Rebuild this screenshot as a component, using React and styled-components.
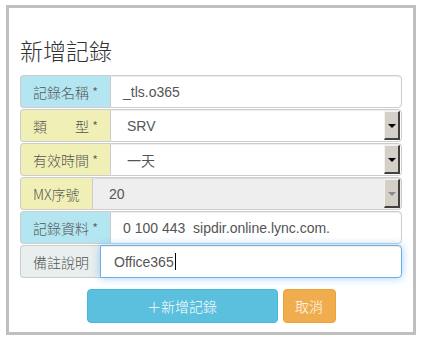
import React from 'react';
import styled, {createGlobalStyle} from 'styled-components';

const GlobalStyle = createGlobalStyle`
  html, body {
    margin: 0;
    padding: 0;
    background: #ffffff;
  }
  body {
    font-family: "Liberation Sans", "Noto Sans CJK TC", Arial, sans-serif;
    font-size: 14px;
    color: #555;
  }
`;

const Page = styled.div`
  width: 423px;
  height: 338px;
  padding: 5px 7px 3px 6px;
  box-sizing: border-box;
`;

const Card = styled.div`
  width: 410px;
  height: 330px;
  box-sizing: border-box;
  border: 3px solid #bfbfbf;
  padding: 26px 11px 0 11px;
  background: #fff;
`;

const Title = styled.h3`
  margin: 0 0 9px 0;
  font-family: "Noto Sans CJK TC", "Liberation Sans", sans-serif;
  font-weight: 300;
  font-size: 23px;
  line-height: 32px;
  color: #333;
`;

const Form = styled.div`
  display: flex;
  flex-direction: column;
  gap: 1px;
`;

const Group = styled.div`
  display: flex;
  height: 33px;
`;

const Addon = styled.div`
  display: flex;
  align-items: center;
  flex: none;
  box-sizing: border-box;
  padding: 0 12px;
  background: ${(p) => p.$bg};
  border: 1px solid #ccc;
  border-right: none;
  border-radius: 4px 0 0 4px;
  font-family: "Noto Sans CJK TC", "Liberation Sans", sans-serif;
  font-weight: 300;
  font-size: 14px;
  color: #555;
  white-space: pre;
  width: ${(p) => (p.$w ? `${p.$w}px` : 'auto')};
`;

const Field = styled.div`
  flex: 1;
  display: flex;
  align-items: center;
  box-sizing: border-box;
  padding-left: ${(p) => p.$pad || 12}px;
  background: ${(p) => (p.$disabled ? '#eeeeee' : '#fff')};
  border: 1px solid ${(p) => (p.$focus ? '#66afe9' : '#ccc')};
  border-radius: 0 4px 4px 0;
  box-shadow: ${(p) =>
    p.$focus
      ? 'inset 0 1px 1px rgba(0,0,0,.075), 0 0 8px rgba(102,175,233,.6)'
      : 'inset 0 1px 1px rgba(0,0,0,.075)'};
  font-family: "Liberation Sans", "Noto Sans CJK TC", sans-serif;
  font-size: 14px;
  color: #555;
  position: relative;
  z-index: ${(p) => (p.$focus ? 1 : 0)};
`;

const Value = styled.span`
  flex: 1;
  white-space: pre;
`;

const Caret = styled.span`
  display: inline-block;
  width: 1px;
  height: 17px;
  background: #000;
  vertical-align: -3px;
  margin-left: 1px;
`;

const DropButton = styled.div`
  flex: none;
  width: 16px;
  height: 29px;
  box-sizing: border-box;
  background: #d4d0c8;
  border-top: 1px solid #f4f2ee;
  border-left: 1px solid #f4f2ee;
  border-right: 2px solid #404040;
  border-bottom: 2px solid #404040;
  display: flex;
  align-items: center;
  justify-content: center;
`;

const Arrow = styled.span`
  width: 0;
  height: 0;
  border-left: 4px solid transparent;
  border-right: 4px solid transparent;
  border-top: 4px solid ${(p) => (p.$disabled ? '#8a8a8a' : '#000')};
  margin-top: 1px;
`;

const Actions = styled.div`
  display: flex;
  justify-content: center;
  gap: 5px;
  margin-top: 11px;
`;

const Button = styled.button`
  height: 34px;
  width: ${(p) => p.$w}px;
  box-sizing: border-box;
  border: 1px solid ${(p) => p.$border};
  border-radius: 4px;
  background: ${(p) => p.$bg};
  color: #fff;
  font-family: "Noto Sans CJK TC", "Liberation Sans", sans-serif;
  font-weight: 300;
  font-size: 14px;
  padding: 0;
  cursor: pointer;
`;

const BLUE = '#b3e6f1';
const YELLOW = '#f0f0b6';
const GREY = '#e9eeee';

function Select({value, pad, disabled}) {
  return (
    <Field $pad={pad} $disabled={disabled} style={{paddingRight: 1}}>
      <Value>{value}</Value>
      <DropButton>
        <Arrow $disabled={disabled}/>
      </DropButton>
    </Field>
  );
}

export default function App() {
  return (
    <>
      <GlobalStyle/>
      <Page>
        <Card>
          <Title>新增記錄</Title>
          <Form>
            <Group>
              <Addon $bg={BLUE} $w={90}>記錄名稱 *</Addon>
              <Field><Value>_tls.o365</Value></Field>
            </Group>
            <Group>
              <Addon $bg={YELLOW} $w={90}>類　　型 *</Addon>
              <Select value="SRV" pad={16}/>
            </Group>
            <Group>
              <Addon $bg={YELLOW} $w={90}>有效時間 *</Addon>
              <Select value="一天" pad={16}/>
            </Group>
            <Group>
              <Addon $bg={YELLOW} $w={72}>MX序號</Addon>
              <Select value="20" pad={16} disabled/>
            </Group>
            <Group>
              <Addon $bg={BLUE} $w={90}>記錄資料 *</Addon>
              <Field><Value>0 100 443  sipdir.online.lync.com.</Value></Field>
            </Group>
            <Group>
              <Addon $bg={GREY} $w={80}>備註說明</Addon>
              <Field $focus $pad={13}>
                <Value>Office365<Caret/></Value>
              </Field>
            </Group>
          </Form>
          <Actions>
            <Button $w={191} $bg="#5bc0de" $border="#46b8da">＋新增記錄</Button>
            <Button $w={53} $bg="#f0ad4e" $border="#eea236">取消</Button>
          </Actions>
        </Card>
      </Page>
    </>
  );
}
